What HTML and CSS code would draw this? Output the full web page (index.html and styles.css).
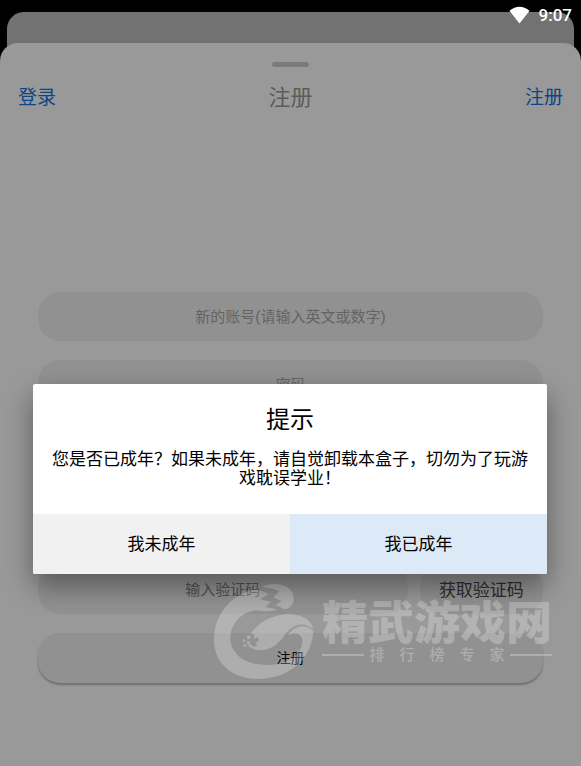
FILE: index.html
```html
<!DOCTYPE html>
<html lang="zh-CN">
<head>
    <meta charset="UTF-8">
    <meta name="viewport" content="width=device-width, initial-scale=1">
    <title>注册</title>
    <link rel="stylesheet" href="styles.css">
</head>
<body>
    <div class="status-bar">
        <svg class="wifi" viewBox="0 0 22 18" aria-hidden="true">
            <path d="M11 18 L0.5 4.5 Q11 -4 21.5 4.5 Z" fill="#fff"/>
        </svg>
        <span>9:07</span>
    </div>

    <div class="back-card"></div>
    <main class="sheet">
        <div class="handle"></div>
        <header class="nav">
            <a href="#login">登录</a>
            <h1>注册</h1>
            <a class="right" href="#register">注册</a>
        </header>

        <form class="form">
            <input class="field" type="text" aria-label="账号" placeholder="新的账号(请输入英文或数字)">
            <input class="field" type="password" aria-label="密码" placeholder="密码">
            <div class="code-row">
                <input class="field" type="text" aria-label="验证码" placeholder="输入验证码">
                <button class="field code-button" type="button">获取验证码</button>
            </div>
            <button class="field submit" type="submit">注册</button>
        </form>

        <div class="watermark">
            <svg class="watermark-logo" viewBox="0 0 336 330" aria-hidden="true">
                <!-- body -->
                <path d="M148 40 C80 46 18 110 18 190 C18 266 76 309 150 309 C236 309 310 256 316 166 C296 142 262 146 238 178 C258 168 276 172 282 186 C290 226 246 267 176 267 C110 267 68 232 67 188 C67 140 108 98 160 104 C178 107 194 106 206 100 L172 93 L190 78 L156 70 L182 54 Z"/>
                <!-- head -->
                <path d="M162 32 C192 18 236 22 252 48 C264 72 254 96 230 100 L202 86 L222 76 L196 64 L214 44 C200 38 182 36 162 32 Z"/>
                <!-- leaf -->
                <path d="M128 174 C154 132 206 112 252 115 C290 118 314 140 315 160 C290 136 256 142 232 174 C212 208 178 227 146 222 C132 218 122 212 118 208 L128 204 L136 212 L148 210 L142 200 L154 194 L148 184 L138 188 L138 174 Z"/>
                <circle cx="122" cy="184" r="6"/>
                <circle cx="108" cy="194" r="4"/>
                <circle cx="121" cy="200" r="5"/>
                <circle cx="110" cy="208" r="4"/>
            </svg>
            <div class="watermark-text">
                <strong>精武游戏网</strong>
                <div class="tagline">
                    <i></i><span>排</span><span>行</span><span>榜</span><span>专</span><span>家</span><i></i>
                </div>
            </div>
        </div>
    </main>

    <div class="overlay">
        <section class="dialog" role="dialog" aria-labelledby="dialog-title">
            <h2 id="dialog-title">提示</h2>
            <p>您是否已成年？如果未成年，请自觉卸载本盒子，切勿为了玩游戏耽误学业！</p>
            <div class="actions">
                <button type="button">我未成年</button>
                <button class="primary" type="button">我已成年</button>
            </div>
        </section>
    </div>
</body>
</html>
```
FILE: styles.css
```css
* {
    box-sizing: border-box;
}
body {
    display: flex;
    flex-direction: column;
    min-height: 100vh;
    margin: 0;
    padding-top: 12px;
    background: #000;
    color: #000;
    font-family: Roboto, "Noto Sans CJK SC", sans-serif;
}
button, input {
    font-family: inherit;
}
h1, h2, p {
    margin: 0;
    font-weight: normal;
}
.status-bar {
    position: absolute;
    top: 5px;
    right: 9px;
    z-index: 1;
    display: flex;
    align-items: center;
    gap: 9px;
    color: #fff;
    font-size: 17px;
    font-weight: 500;
    line-height: 20px;
}
.wifi {
    width: 21px;
    height: 18px;
}
.back-card {
    height: 48px;
    margin: 0 7px;
    border-radius: 17px 17px 0 0;
    background: #727272;
}
.sheet {
    position: relative;
    flex: 1;
    margin-top: -17px;
    padding-top: 19px;
    border-radius: 18px 18px 0 0;
    background: #999;
}
.handle {
    width: 37px;
    height: 5px;
    margin: 0 auto;
    border-radius: 3px;
    background: #7b7b7b;
}
.nav {
    display: grid;
    grid-template-columns: 1fr auto 1fr;
    align-items: center;
    margin-top: 15px;
    padding: 0 18px;
    line-height: 32px;
}
.nav h1 {
    color: #5c5c5c;
    font-size: 22px;
}
.nav a {
    color: #0d4585;
    font-size: 19px;
    text-decoration: none;
}
.nav .right {
    text-align: right;
}

/* form */
.form {
    display: flex;
    flex-direction: column;
    gap: 19px;
    margin-top: 178px;
    padding: 0 38px;
}
.field {
    width: 100%;
    height: 49px;
    padding: 0;
    border: 0;
    border-radius: 22px;
    background: #919191;
    color: #000;
    font-size: 15px;
    text-align: center;
}
.field::placeholder {
    color: #646464;
    opacity: 1;
}
.code-row {
    display: grid;
    grid-template-columns: 3fr 1fr;
    gap: 12px;
    margin-top: 137px;
}
.code-row .field::placeholder {
    color: #505050;
}
.code-button {
    padding-bottom: 2px;
    color: #2c2c2c;
    font-size: 17px;
}
.submit {
    height: 50px;
    padding-bottom: 3px;
    font-size: 14px;
    box-shadow: 0 2px 2px #707070;
}

/* watermark */
.watermark {
    position: absolute;
    top: 533px;
    left: 208px;
    display: flex;
    align-items: center;
    gap: 2px;
    color: #fff;
    pointer-events: none;
    opacity: 0.26;
}
.watermark-logo {
    width: 112px;
    height: 110px;
    fill: #fff;
}
.watermark-text strong {
    display: block;
    font-size: 46px;
    font-weight: 900;
    line-height: 48px;
}
.tagline {
    display: flex;
    align-items: center;
    gap: 15px;
    font-size: 15px;
    font-weight: 500;
    line-height: 16px;
}
.tagline i {
    flex: 1;
    height: 2px;
    background: #fff;
}
.tagline i:first-child {
    margin-right: -10px;
}
.tagline i:last-child {
    margin-left: -10px;
}

/* dialog */
.overlay {
    position: absolute;
    top: 384px;
    left: 0;
    right: 0;
    padding: 0 34px 0 33px;
}
.dialog {
    overflow: hidden;
    border-radius: 2px;
    background: #fff;
    box-shadow: 0 12px 28px rgba(0, 0, 0, 0.4);
    text-align: center;
}
.dialog h2 {
    padding-top: 18px;
    font-size: 24px;
    line-height: 36px;
}
.dialog p {
    padding: 12px 16px 26px;
    font-size: 17px;
    line-height: 19px;
}
.actions {
    display: grid;
    grid-template-columns: 1fr 1fr;
}
.actions button {
    height: 60px;
    padding: 0 0 3px;
    border: 0;
    background: #f1f1f1;
    color: #000;
    font-size: 17px;
}
.actions .primary {
    background: #dce9f6;
}
```
